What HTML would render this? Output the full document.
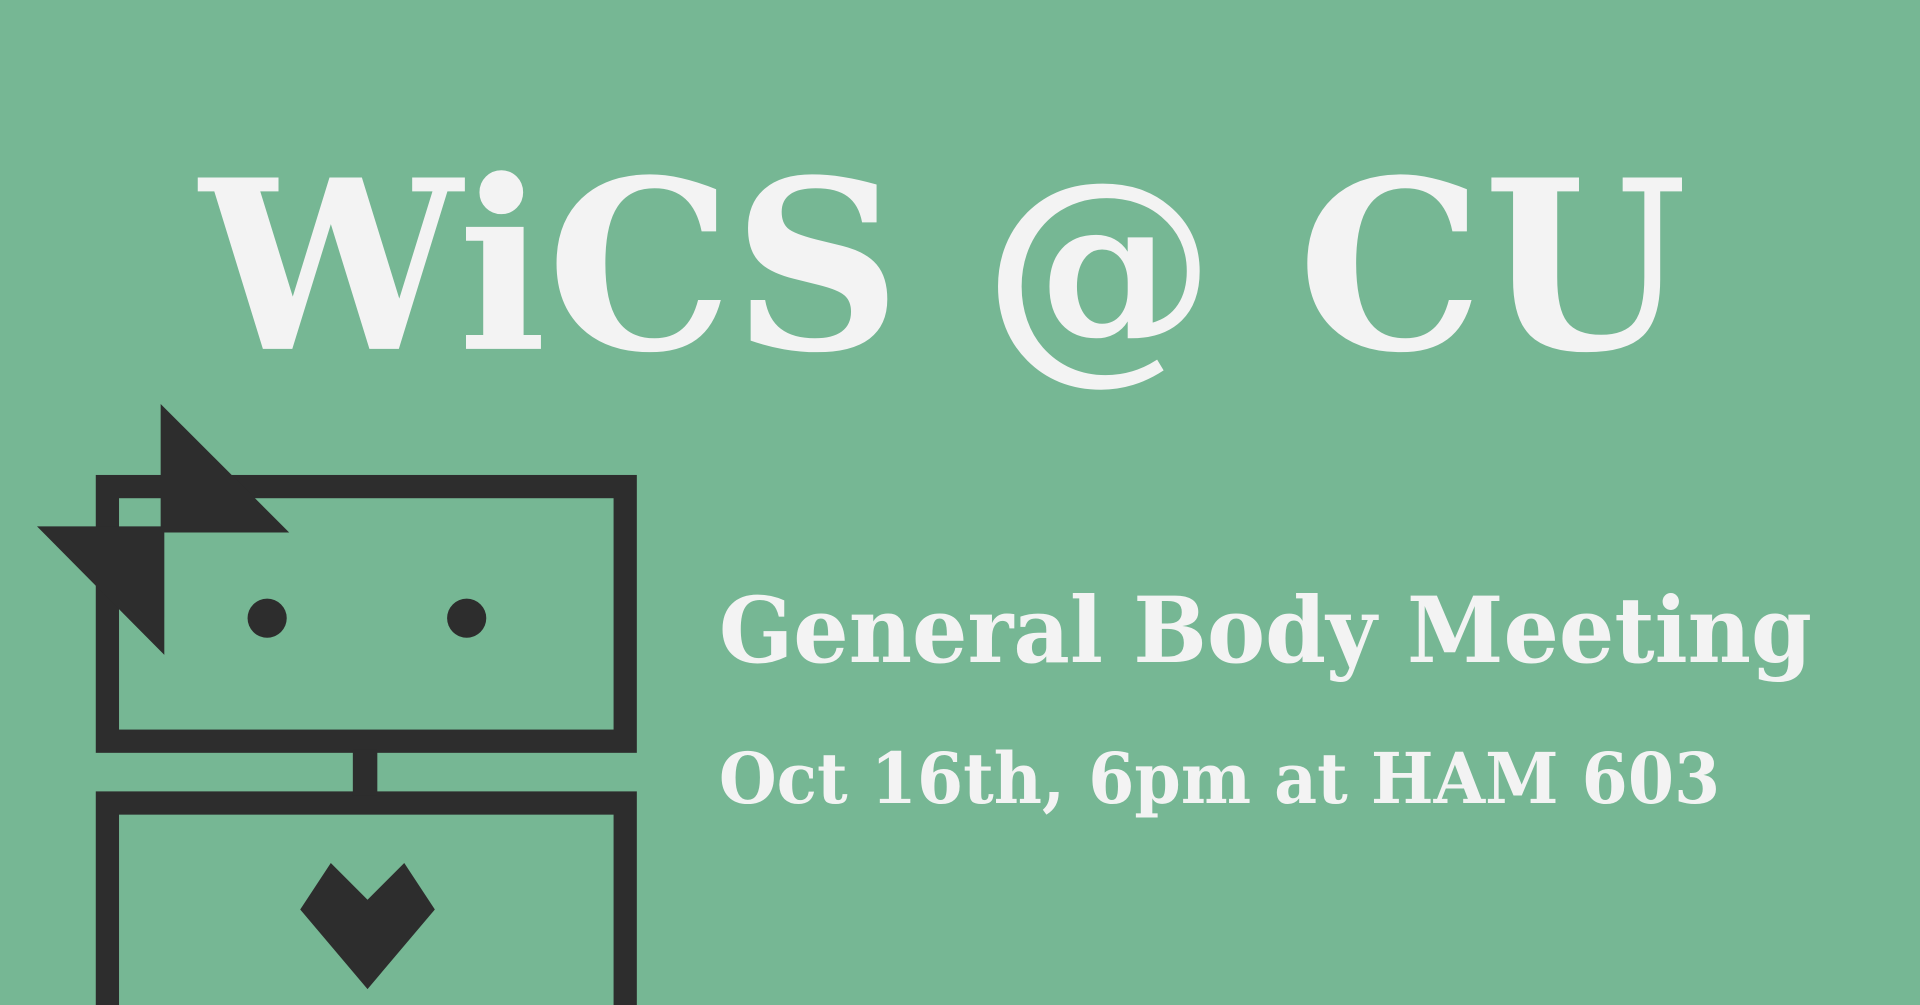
<!DOCTYPE html>
<html><head><meta charset="utf-8"><style>
html,body{margin:0;padding:0;background:#76b794;overflow:hidden}
svg{display:block}
</style></head><body>
<svg width="1920" height="1005" viewBox="0 0 1568 821" xmlns="http://www.w3.org/2000/svg">
<rect width="1568" height="821" fill="#76b794"/>
<g font-family="'DejaVu Serif','Liberation Serif',serif" font-weight="bold" fill="#f3f3f3">
<text x="163" y="285" font-size="192" textLength="1215" lengthAdjust="spacingAndGlyphs">WiCS @ CU</text>
<text x="587" y="541" font-size="74" textLength="893" lengthAdjust="spacingAndGlyphs">General Body Meeting</text>
<text x="587" y="656" font-size="57" textLength="818" lengthAdjust="spacingAndGlyphs">Oct 16th, 6pm at HAM 603</text>
</g>
<g fill="none" stroke="#2d2d2d" stroke-width="19">
<rect x="87.5" y="397.5" width="423" height="208"/>
<rect x="87.5" y="656" width="423" height="200"/>
</g>
<g fill="#2d2d2d">
<rect x="288" y="612" width="20" height="38"/>
<circle cx="218" cy="505" r="16"/>
<circle cx="381" cy="505" r="16"/>
<polygon points="131,330 236,435 131,435"/>
<polygon points="30,430 134,430 134,535"/>
<polygon points="245,743 270,705 300,735 330,705 355,743 300,808"/>
</g>
</svg>
</body></html>
